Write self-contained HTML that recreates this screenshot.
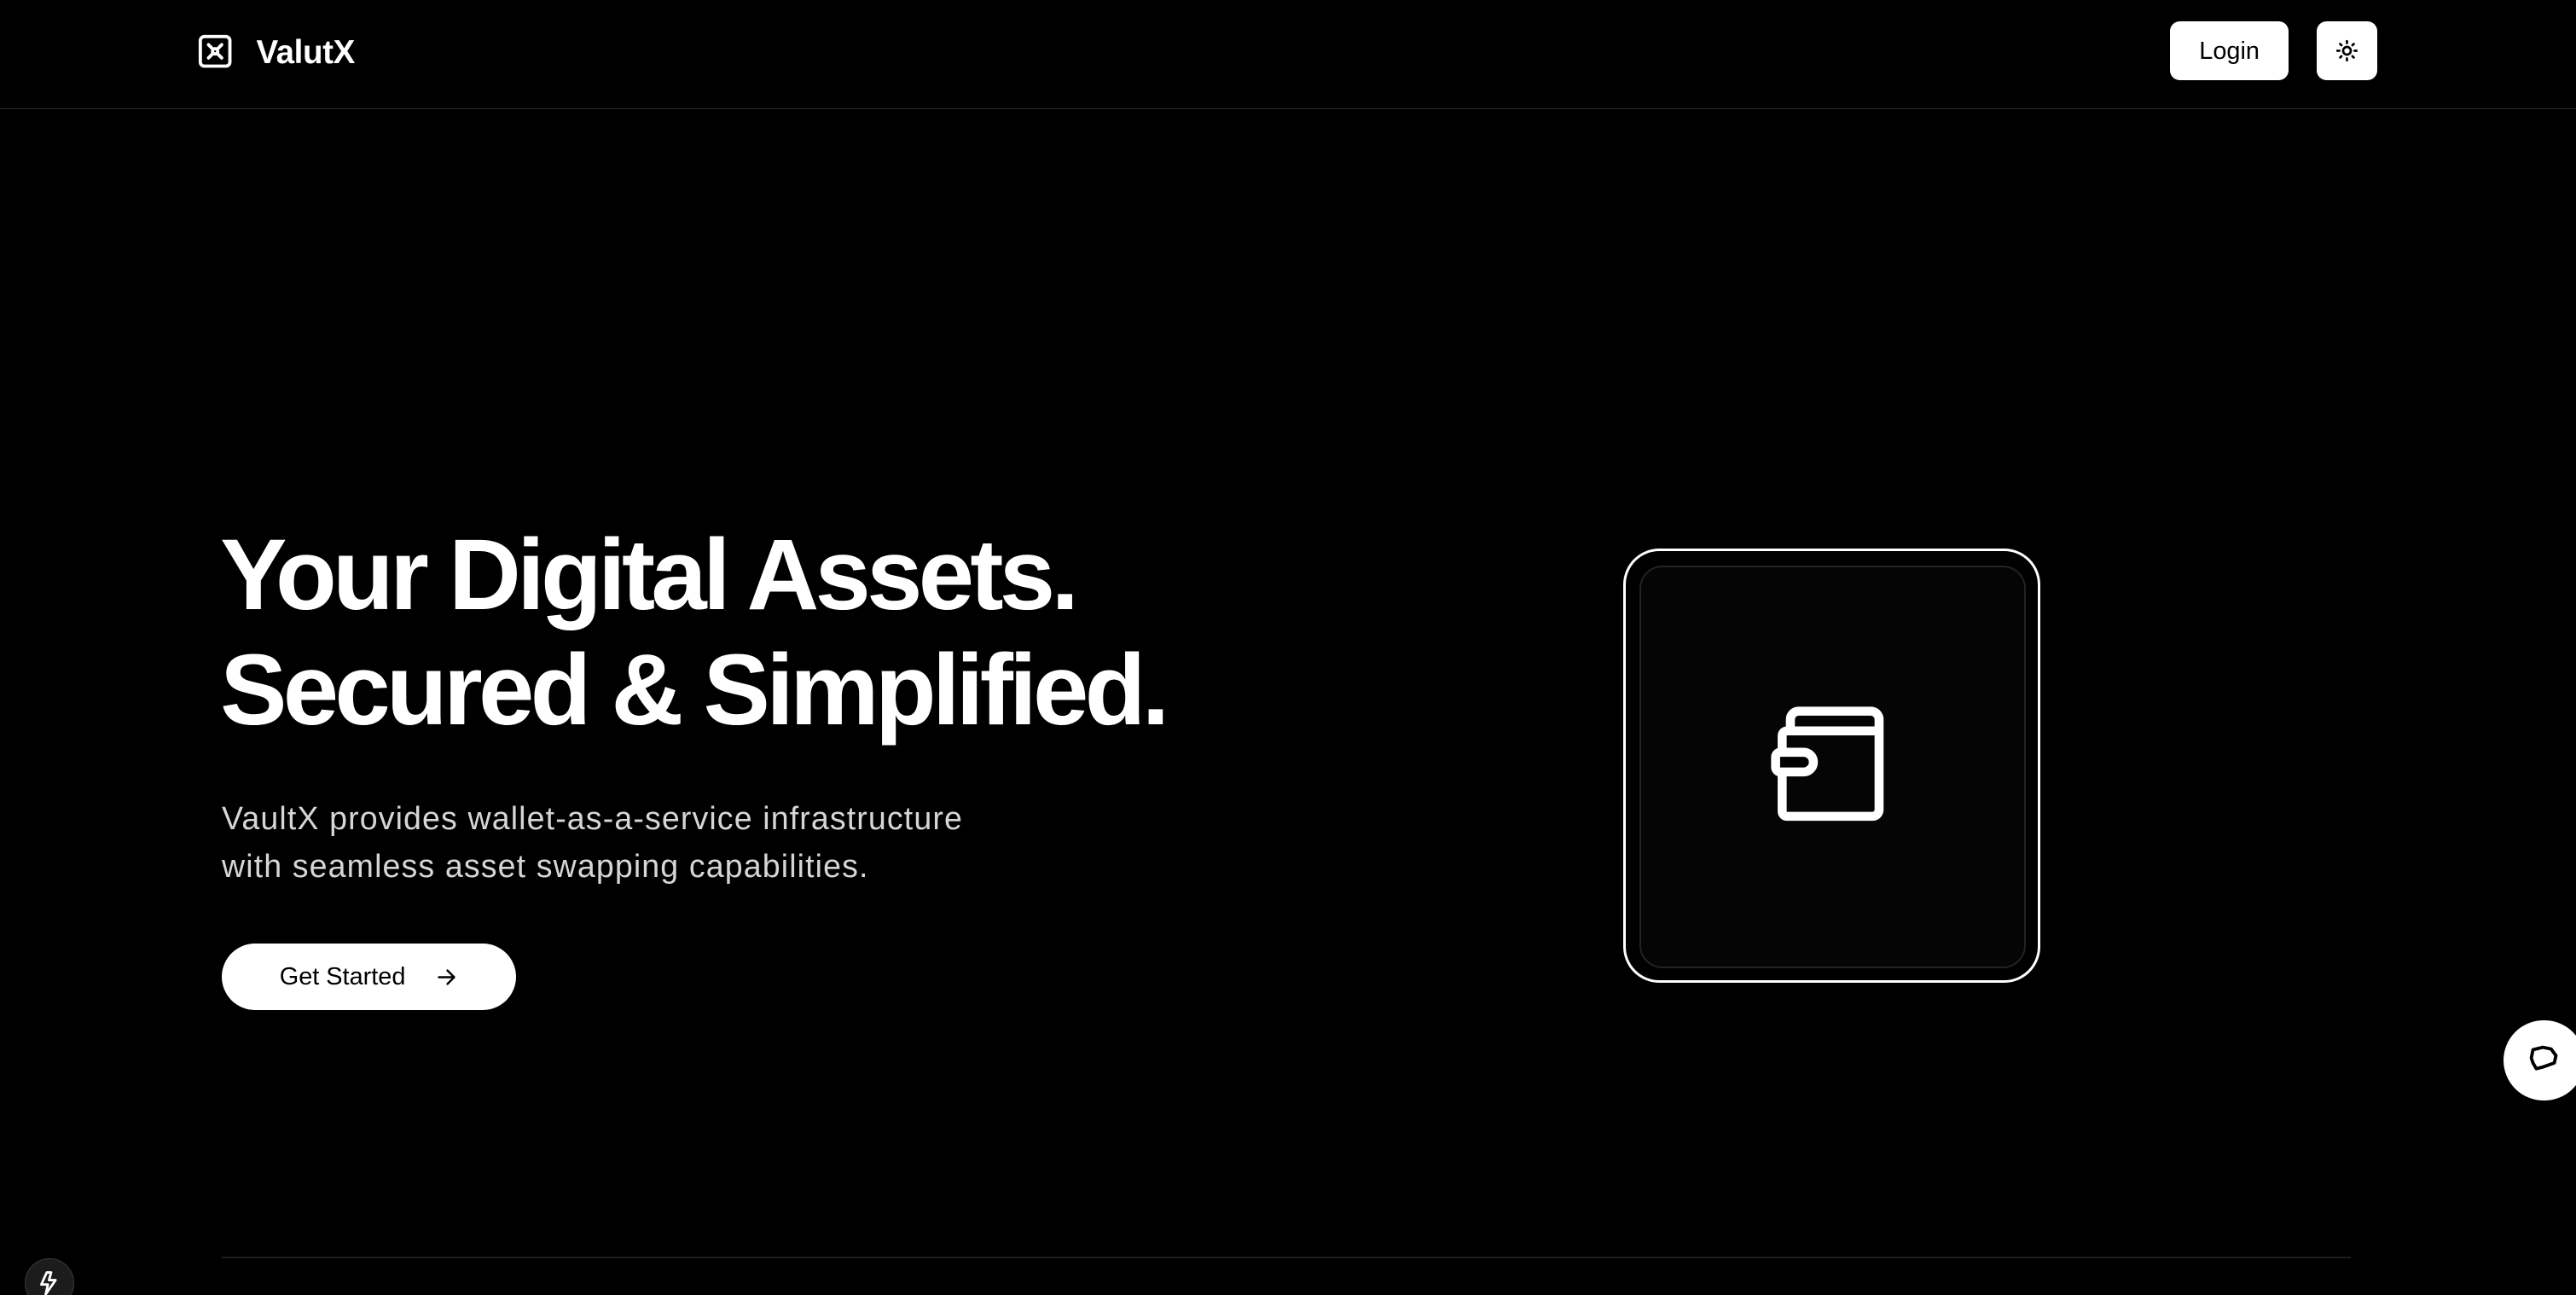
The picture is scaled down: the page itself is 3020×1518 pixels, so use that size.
<!DOCTYPE html>
<html><head><meta charset="utf-8"><style>
html,body{margin:0;padding:0;background:#000;overflow:hidden;width:3020px;height:1518px}
#w{position:relative;width:1568px;height:788px;zoom:1.92602;font-family:"Liberation Sans",sans-serif;color:#fff}
.a{position:absolute}
.hdr{left:0;top:0;width:1568px;height:66px;border-bottom:1px solid #262a33}
h1{margin:0;position:absolute;left:134px;top:315px;font-size:61px;line-height:70px;font-weight:700;letter-spacing:-2.45px;white-space:nowrap}
p{margin:0;position:absolute;left:135px;top:484px;font-size:19.5px;line-height:29px;color:#d6d6d6;letter-spacing:0.58px}
.btn{background:#fff;color:#000;display:flex;align-items:center;justify-content:center}
</style></head><body><div id="w">
<div class="a hdr"></div>
<svg class="a" style="left:120px;top:20px" width="22" height="22" viewBox="0 0 22 22" fill="none" stroke="#fff" stroke-width="2" stroke-linecap="round"><rect x="2" y="2" width="18" height="18" rx="2.5"/><path d="M7 7l8 8M15 7l-8 8"/><circle cx="11" cy="11" r="1.6" fill="#000"/></svg>
<div class="a" style="left:156px;top:21px;font-size:20px;font-weight:700;letter-spacing:-0.2px">ValutX</div>
<div class="a btn" style="left:1321px;top:13px;width:72px;height:36px;border-radius:6px;font-size:15px;padding-top:1px;box-sizing:border-box">Login</div>
<div class="a btn" style="left:1410px;top:13px;width:37px;height:36px;border-radius:6px">
<svg width="14" height="14" viewBox="0 0 24 24" fill="none" stroke="#000" stroke-width="2.4" stroke-linecap="round"><circle cx="12" cy="12" r="4"/><path d="M12 2v2M12 20v2M4.9 4.9l1.4 1.4M17.7 17.7l1.4 1.4M2 12h2M20 12h2M4.9 19.1l1.4-1.4M17.7 6.3l1.4-1.4"/></svg></div>
<h1>Your Digital Assets.<br>Secured &amp; Simplified.</h1>
<p>VaultX provides wallet-as-a-service infrastructure<br>with seamless asset swapping capabilities.</p>
<div class="a btn" style="left:135px;top:574px;width:179px;height:41px;border-radius:21px;font-size:15px"><span style="margin-right:18px">Get Started</span>
<svg width="14" height="14" viewBox="0 0 24 24" fill="none" stroke="#000" stroke-width="2.2" stroke-linecap="round" stroke-linejoin="round"><path d="M4 12h16M13 5l7 7-7 7"/></svg></div>
<div class="a" style="left:988px;top:334px;width:251px;height:261px;border:2px solid #fff;border-radius:22px"></div>
<div class="a" style="left:998px;top:344px;width:233px;height:243px;border:1.5px solid #232323;border-radius:14px;background:#050505"></div>
<svg class="a" style="left:1076px;top:428px" width="78" height="78" viewBox="0 0 78 78" fill="none" stroke="#fff" stroke-width="5.5" stroke-linecap="round" stroke-linejoin="round"><path d="M14 16V10a5 5 0 0 1 5-5h44a5 5 0 0 1 5 5v55a4 4 0 0 1-4 4H12a3 3 0 0 1-3-3V20a3 3 0 0 1 3-3h53a3 3 0 0 0 3-3"/><path d="M8 30h14a6 6 0 0 1 0 12H8a3 3 0 0 1-3-3v-6a3 3 0 0 1 3-3z" fill="#000"/></svg>
<div class="a" style="left:1524px;top:621px;width:49px;height:49px;border-radius:50%;background:#fff"></div>
<svg class="a" style="left:1536px;top:633px" width="25" height="25" viewBox="0 0 25 25" fill="none" stroke="#000" stroke-width="2" stroke-linejoin="round"><path d="M6 6l6-1.5 5 1 3 4-1 4.5-7 2.5-4 1-2-3.5-1-3z"/></svg>
<div class="a" style="left:135px;top:765px;width:1296px;height:1px;background:#1e1e1e"></div>
<div class="a" style="left:15px;top:766px;width:29px;height:29px;border-radius:50%;background:#1c1c1c;border:1px solid #3a3a3a"></div>
<svg class="a" style="left:22px;top:773px" width="16" height="16" viewBox="0 0 24 24" fill="none" stroke="#fff" stroke-width="2.2" stroke-linejoin="round"><path d="M10 2L5 13h6l-2 9 9-13h-6l2-7z"/></svg>
</div></body></html>
